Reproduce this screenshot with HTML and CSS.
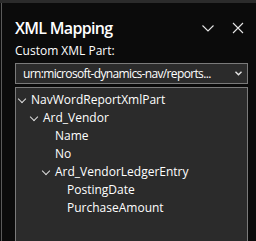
FILE: index.html
```html
<!DOCTYPE html>
<html lang="en">
<head>
  <meta charset="UTF-8" />
  <title>XML Mapping</title>
  <link rel="stylesheet" href="styles.css">
</head>
<body>
  <div class="topbar"></div>
  <div class="pane">
    <div class="header">
      <h1>XML Mapping</h1>
      <div class="tools">
        <svg width="14" height="14" viewBox="0 0 14 14"><path d="M1.5 4.5 L7 10 L12.5 4.5" fill="none" stroke="#e6e6e6" stroke-width="1.1"/></svg>
        <svg width="12" height="12" viewBox="0 0 12 12"><path d="M1 1 L11 11 M11 1 L1 11" fill="none" stroke="#e6e6e6" stroke-width="1.1"/></svg>
      </div>
    </div>
    <label class="field-label">Custom XML Part:</label>
    <div class="select">
      <span class="select-text">urn:microsoft-dynamics-nav/reports...</span>
      <svg width="7" height="5" viewBox="0 0 7 5"><path d="M0.5 0.8 L3.5 3.8 L6.5 0.8" fill="none" stroke="#e6e6e6" stroke-width="1.4"/></svg>
    </div>
    <div class="tree">
      <div class="row lvl0"><span class="chev"></span>NavWordReportXmlPart</div>
      <div class="row lvl1"><span class="chev"></span>Ard_Vendor</div>
      <div class="row lvl2 leaf">Name</div>
      <div class="row lvl2 leaf">No</div>
      <div class="row lvl2"><span class="chev"></span>Ard_VendorLedgerEntry</div>
      <div class="row lvl3 leaf">PostingDate</div>
      <div class="row lvl3 leaf">PurchaseAmount</div>
    </div>
  </div>
</body>
</html>
```

FILE: styles.css
```css
html, body { margin: 0; height: 100%; }
body { background: #0b0b0b; color: #fff; font-family: "Open Sans", "Noto Sans", sans-serif; font-size: 12px; overflow: hidden; display: flex; flex-direction: column; }
.topbar { height: 3px; flex: none; background: #2b2b2b; }
.pane { flex: 1; min-height: 0; display: flex; flex-direction: column; border-left: 1px solid #5a5a5a; margin-left: 1px; padding: 0 8px 0 13px; }

.header { display: flex; align-items: center; justify-content: space-between; padding: 14px 0 4px; }
.header h1 { margin: 0; font-size: 16px; line-height: 22px; font-weight: 600; letter-spacing: -0.7px; }
.tools { display: flex; align-items: center; gap: 17px; padding-right: 4px; }
.tools svg { display: block; }

.field-label { display: block; line-height: 15px; margin-bottom: 5px; }
.select { display: flex; align-items: center; height: 19px; border: 1px solid #7a7a7a; background: #2b2b2b; padding: 0 5px 0 7px; }
.select-text { flex: 1; white-space: nowrap; letter-spacing: -0.65px; }

.tree { flex: 1; margin-top: 3px; border: 1px solid #7a7a7a; border-bottom: none; background: #2b2b2b; padding-top: 3px; }
.row { height: 18px; line-height: 18px; display: flex; align-items: center; }
.chev { width: 8px; height: 8px; margin-right: 5px; position: relative; }
.chev::before { content: ""; position: absolute; left: 1px; top: 0; width: 5px; height: 5px; border-right: 1px solid #ddd; border-bottom: 1px solid #ddd; transform: rotate(45deg); }
.lvl0 { padding-left: 2px; }
.lvl1 { padding-left: 14px; }
.lvl2 { padding-left: 26px; }
.lvl2.leaf { padding-left: 39px; }
.lvl3.leaf { padding-left: 51px; }
```
